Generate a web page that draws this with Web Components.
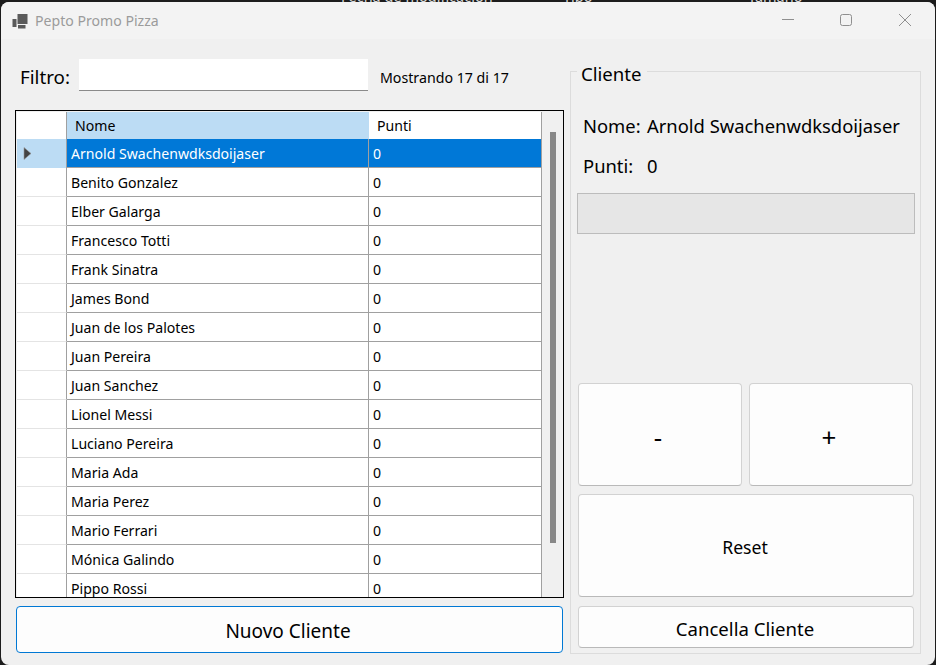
<!DOCTYPE html>
<html lang="it">
<head>
<meta charset="utf-8">
<title>Pepto Promo Pizza</title>
<style>
  html, body { margin: 0; height: 665px; overflow: hidden; background: #1c1c1c; }
  body { font-family: "Noto Sans", "Open Sans", sans-serif; color: #000; }
</style>
</head>
<body>
<desktop-behind>
  <span style="width:333px"></span>
  <span style="width:222px">Fecha de modificación</span>
  <span style="width:185px">Tipo</span>
  <span>Tamaño</span>
</desktop-behind>
<app-window>
  <title-bar>Pepto Promo Pizza</title-bar>
  <div style="display:grid;grid-template-columns:549px 351px;column-gap:6px;padding:20px 0 0 14px">
    <div>
      <filter-row count="Mostrando 17 di 17"></filter-row>
      <client-grid></client-grid>
      <win-button primary style="height:47px;margin:8px 0 0 1px;width:547px;font-size:19px;padding:2px 3px 0 0">Nuovo Cliente</win-button>
    </div>
    <client-panel name="Arnold Swachenwdksdoijaser" points="0"></client-panel>
  </div>
</app-window>

<script>
// the other window that peeks out above ours
class DesktopBehind extends HTMLElement {
  constructor() {
    super();
    this.attachShadow({ mode: 'open' });
    this.shadowRoot.innerHTML = `
      <style>
        :host { display: flex; height: 2px; overflow: hidden; font: 14.5px/12px "Noto Sans", sans-serif; color: #d8d8d8; }
        ::slotted(span) { display: block; flex: none; margin-top: -10px; padding-left: 8px; box-sizing: border-box; white-space: nowrap; }
      </style>
      <slot></slot>`;
  }
}

class AppWindow extends HTMLElement {
  constructor() {
    super();
    this.attachShadow({ mode: 'open' });
    this.shadowRoot.innerHTML = `
      <style>
        :host {
          display: block;
          width: 934px;
          height: 663px;
          margin-left: 1px;
          background: #f0f0f0;
          border-radius: 8px;
          overflow: hidden;
        }
      </style>
      <slot></slot>`;
  }
}

class TitleBar extends HTMLElement {
  constructor() {
    super();
    this.attachShadow({ mode: 'open' });
    this.shadowRoot.innerHTML = `
      <style>
        :host {
          display: flex;
          align-items: center;
          height: 37px;
          background: #f3f3f3;
          font-size: 14.1px;
          color: #9b9b9b;
        }
        .logo { margin-left: 11px; margin-right: 7px; }
        .title { flex: 1; }
        .ctl { display: flex; }
        .ctl svg { display: block; width: 59px; height: 37px; }
      </style>
      <svg class="logo" width="16" height="16" viewBox="0 0 16 16" fill="#5a5a5a">
        <rect x="0.5" y="6" width="4" height="8"/>
        <rect x="5.5" y="1" width="10" height="10"/>
        <rect x="6" y="12" width="7.5" height="3.5"/>
      </svg>
      <span class="title"><slot></slot></span>
      <div class="ctl">
        <svg viewBox="0 0 59 37" fill="none" stroke="#8f8f8f"><path d="M24 17.5h12"/></svg>
        <svg viewBox="0 0 59 37" fill="none" stroke="#8f8f8f"><rect x="23.5" y="12.5" width="11" height="11" rx="2"/></svg>
        <svg viewBox="0 0 59 37" fill="none" stroke="#8f8f8f"><path d="M23 12l12 12M35 12l-12 12"/></svg>
      </div>`;
  }
}

class FilterRow extends HTMLElement {
  constructor() {
    super();
    this.attachShadow({ mode: 'open' });
  }

  connectedCallback() {
    this.shadowRoot.innerHTML = `
      <style>
        :host { display: flex; align-items: center; height: 32px; margin-bottom: 19px; }
        label { font-size: 18.8px; margin-left: 5px; width: 59px; padding-top: 4px; }
        .box {
          width: 289px;
          height: 32px;
          box-sizing: border-box;
          background: #fff;
          border: 0;
          border-bottom: 1px solid #8a8a8a;
          padding: 0;
          margin: 0;
          outline: 0;
        }
        .count { font-size: 14.2px; margin-left: 12px; white-space: nowrap; padding-top: 4px; }
      </style>
      <label>Filtro:</label>
      <input class="box" type="text">
      <span class="count">${this.getAttribute('count') || ''}</span>`;
  }
}

const CLIENTS = [
  'Arnold Swachenwdksdoijaser', 'Benito Gonzalez', 'Elber Galarga', 'Francesco Totti',
  'Frank Sinatra', 'James Bond', 'Juan de los Palotes', 'Juan Pereira', 'Juan Sanchez',
  'Lionel Messi', 'Luciano Pereira', 'Maria Ada', 'Maria Perez', 'Mario Ferrari',
  'Mónica Galindo', 'Pippo Rossi'
];

class ClientGrid extends HTMLElement {
  constructor() {
    super();
    this.attachShadow({ mode: 'open' });
  }

  connectedCallback() {
    const rows = CLIENTS.map((name, i) => `
      <div class="row ${i === 0 ? 'sel' : ''}">
        <div class="head">${i === 0 ? '<svg width="9" height="13" viewBox="0 0 9 13"><path d="M1 0.5l7 6-7 6z" fill="#444" stroke="#999" stroke-width=".6"/></svg>' : ''}</div>
        <div class="cell">${name}</div>
        <div class="cell">0</div>
      </div>`).join('');

    this.shadowRoot.innerHTML = `
      <style>
        :host {
          display: block;
          height: 488px;
          box-sizing: border-box;
          border: 1px solid #000;
          padding: 1px 0 0 1px;
          overflow: hidden;
          font-size: 14.1px;
          background: #f0f0f0;
        }
        .wrap { display: grid; grid-template-columns: 1fr 21px; height: 100%; }
        .table { overflow: hidden; border-right: 1px solid #a0a0a0; }
        .row, .top { display: grid; grid-template-columns: 50px 302px 172px; }
        .top { height: 27px; border-bottom: 1px solid #a0a0a0; box-sizing: border-box; }
        .top div { line-height: 27px; padding-left: 8px; background: #fff; }
        .top .corner { padding: 0; border-right: 1px solid #a0a0a0; box-sizing: border-box; }
        .top .on { background: #bcdcf4; }
        .row { height: 29px; grid-template-rows: 29px; box-sizing: border-box; background: #fff; }
        .head { border-right: 1px solid #a0a0a0; border-bottom: 1px solid #e4e4e4; box-sizing: border-box; display: flex; align-items: center; padding-left: 6px; }
        .cell { height: 29px; border-bottom: 1px solid #a0a0a0; border-right: 1px solid #a0a0a0; line-height: 28px; padding: 1px 0 0 4px; box-sizing: border-box; white-space: nowrap; overflow: hidden; }
        .cell:last-child { border-right: 0; }
        .sel .head { background: #bcdcf4; border-bottom: 0; }
        .sel .cell { background: #0078d7; color: #fff; }
        .bar { padding: 20px 7px 0 8px; }
        .thumb { width: 6px; height: 411px; background: #888; }
      </style>
      <div class="wrap">
        <div class="table">
          <div class="top">
            <div class="corner"></div>
            <div class="on">Nome</div>
            <div>Punti</div>
          </div>
          ${rows}
        </div>
        <div class="bar"><div class="thumb"></div></div>
      </div>`;
  }
}

class WinButton extends HTMLElement {
  constructor() {
    super();
    this.attachShadow({ mode: 'open' });
    this.shadowRoot.innerHTML = `
      <style>
        :host {
          display: flex;
          align-items: center;
          justify-content: center;
          box-sizing: border-box;
          background: #fdfdfd;
          border: 1px solid #d2d2d2;
          border-bottom-color: #b9b9b9;
          border-radius: 4px;
          font-size: 17.6px;
          padding: 2px 2px 0 0;
          cursor: default;
        }
        :host([primary]) { border: 1.5px solid #0078d4; }
      </style>
      <slot></slot>`;
  }
}

class ClientPanel extends HTMLElement {
  constructor() {
    super();
    this.attachShadow({ mode: 'open' });
  }

  connectedCallback() {
    this.shadowRoot.innerHTML = `
      <style>
        :host { display: block; margin-top: -3px; font-size: 18.4px; }
        fieldset {
          margin: 0;
          height: 598px;
          box-sizing: border-box;
          border: 1px solid #dcdcdc;
          padding: 0 5px 5px 6px;
          display: flex;
          flex-direction: column;
        }
        legend { padding: 6px 5px 0 4px; line-height: 24px; font-size: 18.6px; }
        .info { display: grid; grid-template-columns: 64px 1fr; row-gap: 16px; margin: 28px 0 15px 6px; line-height: 24px; white-space: nowrap; }
        .progress { height: 41px; box-sizing: border-box; background: #e6e6e6; border: 1px solid #bcbcbc; }
        .actions { margin: auto 1px 0 1px; display: grid; grid-template-columns: 164px 164px; column-gap: 7px; row-gap: 8px; grid-template-rows: 103px 103px 43px; }
        .wide { grid-column: 1 / -1; margin-right: -1px; }
        .big { font-size: 26px; padding: 5px 4px 0 0; }
        .last { margin-top: 1px; font-size: 18.6px; }
      </style>
      <fieldset>
        <legend>Cliente</legend>
        <div class="info">
          <span>Nome:</span><span>${this.getAttribute('name')}</span>
          <span>Punti:</span><span>${this.getAttribute('points')}</span>
        </div>
        <div class="progress"></div>
        <div class="actions">
          <win-button class="big">-</win-button>
          <win-button class="big">+</win-button>
          <win-button class="wide">Reset</win-button>
          <win-button class="wide last">Cancella Cliente</win-button>
        </div>
      </fieldset>`;
  }
}

customElements.define('desktop-behind', DesktopBehind);
customElements.define('app-window', AppWindow);
customElements.define('title-bar', TitleBar);
customElements.define('filter-row', FilterRow);
customElements.define('client-grid', ClientGrid);
customElements.define('win-button', WinButton);
customElements.define('client-panel', ClientPanel);
</script>
</body>
</html>
